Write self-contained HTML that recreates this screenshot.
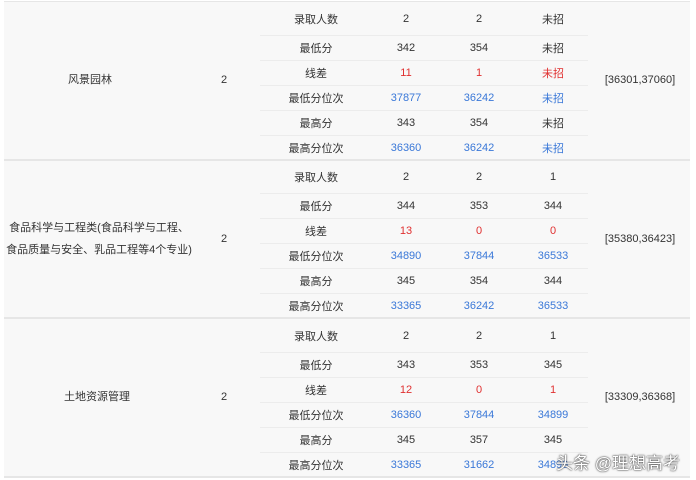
<!DOCTYPE html>
<html><head><meta charset="utf-8"><style>
body{margin:0;width:696px;height:480px;background:#fff;font-family:"Liberation Sans","Noto Sans CJK SC",sans-serif;font-size:11px;color:#333;position:relative;overflow:hidden}
.sec{position:absolute;left:4px;width:686px;background:#f8f8f8;border-bottom:2px solid #e6e6e6}
.c{position:absolute;display:flex;align-items:center;justify-content:center;text-align:center;line-height:19px}
.row{position:absolute;left:256px;width:328px;border-bottom:1px solid #ececec}
.row div{position:absolute;top:0;bottom:0;display:flex;align-items:center;justify-content:center}
.l{left:0;width:112px}.a{left:112px;width:68px}.b{left:180px;width:78px}.d{left:258px;width:70px}
.bl{color:#3a78d8}.r{color:#e03030}
.wm{position:absolute;left:556px;top:449px;font-size:17px;color:#fff;text-shadow:0 0 2px #444,0 0 1px #222;font-family:"Liberation Sans","Noto Sans CJK SC",sans-serif}
</style></head><body>
<div style="position:absolute;left:4px;top:1px;width:686px;height:1px;background:#e6e6e6"></div>

<div class="sec" style="top:2px;height:157px">
<div class="c" style="left:0;width:172px;top:0;height:157px">风景园林</div>
<div class="c" style="left:200px;width:40px;top:0;height:157px">2</div>
<div class="c" style="left:586px;width:100px;top:0;height:157px">[36301,37060]</div>
<div class="row" style="top:0;height:33px"><div class="l">录取人数</div><div class="a">2</div><div class="b">2</div><div class="d">未招</div></div>
<div class="row" style="top:34px;height:24px"><div class="l">最低分</div><div class="a">342</div><div class="b">354</div><div class="d">未招</div></div>
<div class="row r" style="top:59px;height:24px"><div class="l" style="color:#333">线差</div><div class="a">11</div><div class="b">1</div><div class="d">未招</div></div>
<div class="row bl" style="top:84px;height:24px"><div class="l" style="color:#333">最低分位次</div><div class="a">37877</div><div class="b">36242</div><div class="d">未招</div></div>
<div class="row" style="top:109px;height:24px"><div class="l">最高分</div><div class="a">343</div><div class="b">354</div><div class="d">未招</div></div>
<div class="row bl" style="top:134px;height:23px;border:none"><div class="l" style="color:#333">最高分位次</div><div class="a">36360</div><div class="b">36242</div><div class="d">未招</div></div>
</div>

<div class="sec" style="top:161px;height:156px">
<div class="c" style="left:0;width:190px;top:0;height:156px;line-height:22px">食品科学与工程类(食品科学与工程、<br>食品质量与安全、乳品工程等4个专业)</div>
<div class="c" style="left:200px;width:40px;top:0;height:156px">2</div>
<div class="c" style="left:586px;width:100px;top:0;height:156px">[35380,36423]</div>
<div class="row" style="top:0;height:32px"><div class="l" style="align-items:flex-start;padding-top:8px">录取人数</div><div class="a">2</div><div class="b">2</div><div class="d">1</div></div>
<div class="row" style="top:33px;height:24px"><div class="l">最低分</div><div class="a">344</div><div class="b">353</div><div class="d">344</div></div>
<div class="row r" style="top:58px;height:24px"><div class="l" style="color:#333">线差</div><div class="a">13</div><div class="b">0</div><div class="d">0</div></div>
<div class="row bl" style="top:83px;height:24px"><div class="l" style="color:#333">最低分位次</div><div class="a">34890</div><div class="b">37844</div><div class="d">36533</div></div>
<div class="row" style="top:108px;height:24px"><div class="l">最高分</div><div class="a">345</div><div class="b">354</div><div class="d">344</div></div>
<div class="row bl" style="top:133px;height:23px;border:none"><div class="l" style="color:#333">最高分位次</div><div class="a">33365</div><div class="b">36242</div><div class="d">36533</div></div>
</div>

<div class="sec" style="top:319px;height:157px">
<div class="c" style="left:0;width:186px;top:0;height:157px">土地资源管理</div>
<div class="c" style="left:200px;width:40px;top:0;height:157px">2</div>
<div class="c" style="left:586px;width:100px;top:0;height:157px">[33309,36368]</div>
<div class="row" style="top:0;height:33px"><div class="l" style="align-items:flex-start;padding-top:9px">录取人数</div><div class="a">2</div><div class="b">2</div><div class="d">1</div></div>
<div class="row" style="top:34px;height:24px"><div class="l">最低分</div><div class="a">343</div><div class="b">353</div><div class="d">345</div></div>
<div class="row r" style="top:59px;height:24px"><div class="l" style="color:#333">线差</div><div class="a">12</div><div class="b">0</div><div class="d">1</div></div>
<div class="row bl" style="top:84px;height:24px"><div class="l" style="color:#333">最低分位次</div><div class="a">36360</div><div class="b">37844</div><div class="d">34899</div></div>
<div class="row" style="top:109px;height:24px"><div class="l">最高分</div><div class="a">345</div><div class="b">357</div><div class="d">345</div></div>
<div class="row bl" style="top:134px;height:23px;border:none"><div class="l" style="color:#333">最高分位次</div><div class="a">33365</div><div class="b">31662</div><div class="d">34899</div></div>
</div>
<div class="wm">头条 @理想高考</div>
</body></html>
